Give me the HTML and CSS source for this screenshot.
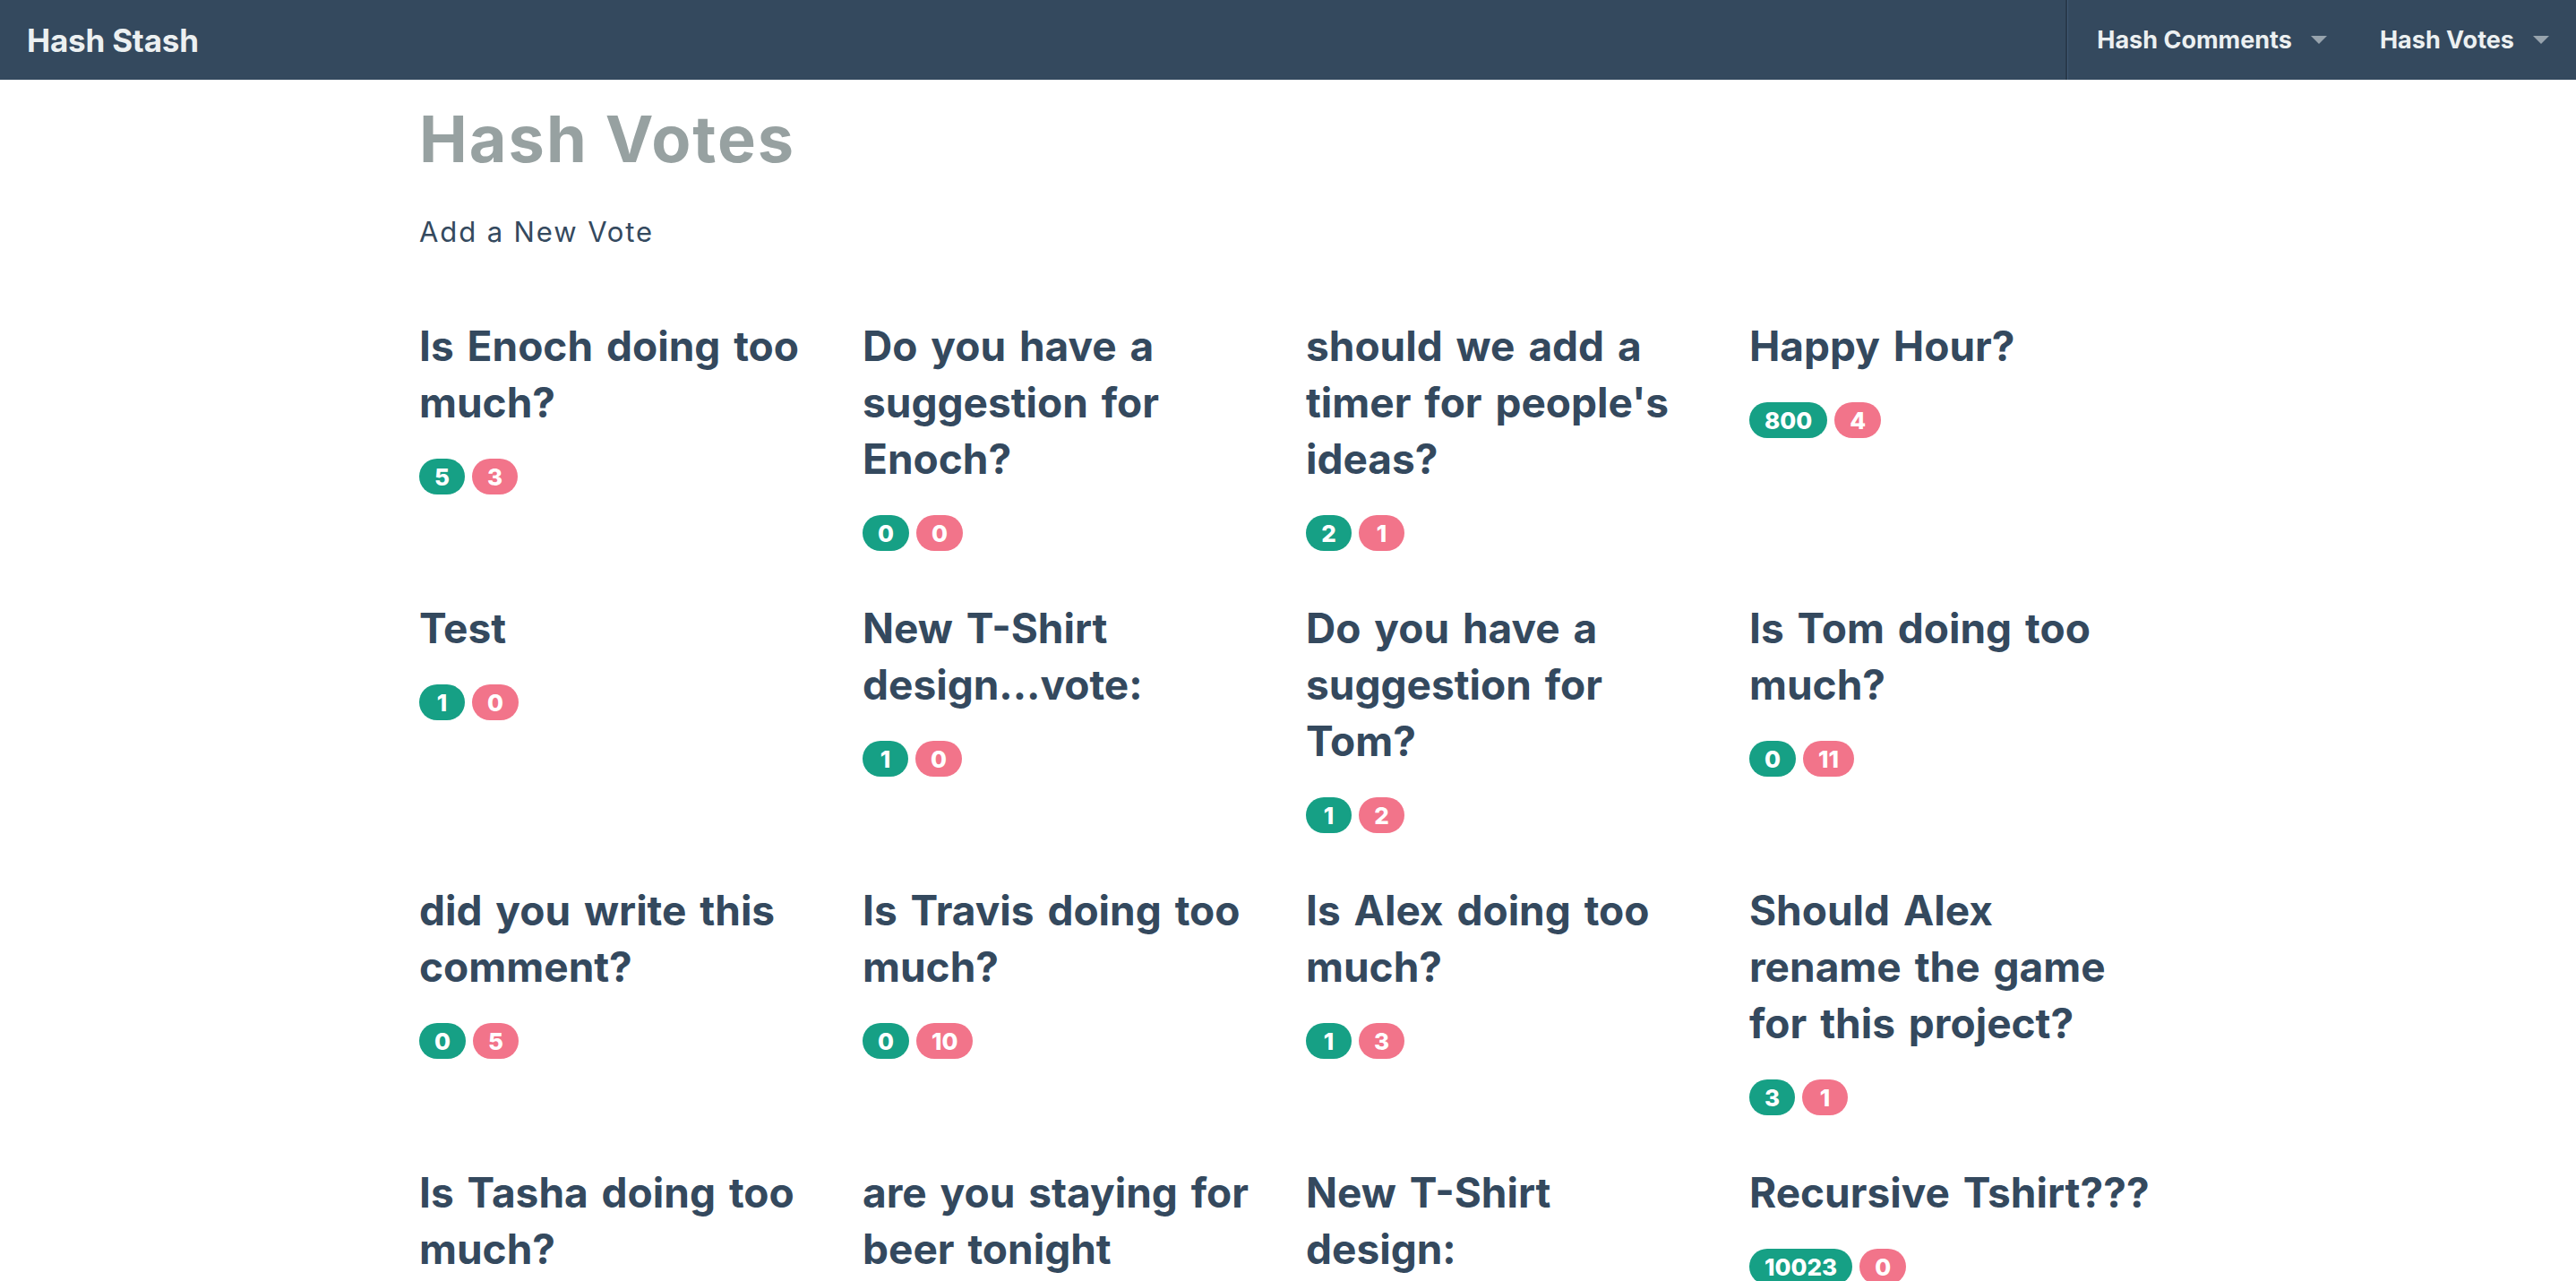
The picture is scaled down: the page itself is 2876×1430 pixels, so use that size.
FILE: index.html
```html
<!DOCTYPE html>
<html lang="en">
<head>
<meta charset="utf-8">
<title>Hash Votes</title>
<link rel="stylesheet" href="styles.css">
</head>
<body>
<nav class="navbar">
  <a class="brand" href="#">Hash Stash</a>
  <ul class="nav-right">
    <li class="nav-item">Hash Comments <span class="caret"></span></li>
    <li class="nav-item">Hash Votes <span class="caret"></span></li>
  </ul>
</nav>
<main class="container">
  <h1 class="page-title">Hash Votes</h1>
  <a class="add-link" href="#">Add a New Vote</a>
  <div class="vote-grid">
    <div class="vote"><h3 class="vote-title">Is Enoch doing too much?</h3><div class="badges"><span class="badge yes">5</span><span class="badge no">3</span></div></div>
    <div class="vote"><h3 class="vote-title">Do you have a suggestion for Enoch?</h3><div class="badges"><span class="badge yes">0</span><span class="badge no">0</span></div></div>
    <div class="vote"><h3 class="vote-title">should we add a timer for people's ideas?</h3><div class="badges"><span class="badge yes">2</span><span class="badge no">1</span></div></div>
    <div class="vote"><h3 class="vote-title">Happy Hour?</h3><div class="badges"><span class="badge yes">800</span><span class="badge no">4</span></div></div>

    <div class="vote"><h3 class="vote-title">Test</h3><div class="badges"><span class="badge yes">1</span><span class="badge no">0</span></div></div>
    <div class="vote"><h3 class="vote-title">New T-Shirt design...vote:</h3><div class="badges"><span class="badge yes">1</span><span class="badge no">0</span></div></div>
    <div class="vote"><h3 class="vote-title">Do you have a suggestion for Tom?</h3><div class="badges"><span class="badge yes">1</span><span class="badge no">2</span></div></div>
    <div class="vote"><h3 class="vote-title">Is Tom doing too much?</h3><div class="badges"><span class="badge yes">0</span><span class="badge no">11</span></div></div>

    <div class="vote"><h3 class="vote-title">did you write this comment?</h3><div class="badges"><span class="badge yes">0</span><span class="badge no">5</span></div></div>
    <div class="vote"><h3 class="vote-title">Is Travis doing too much?</h3><div class="badges"><span class="badge yes">0</span><span class="badge no">10</span></div></div>
    <div class="vote"><h3 class="vote-title">Is Alex doing too much?</h3><div class="badges"><span class="badge yes">1</span><span class="badge no">3</span></div></div>
    <div class="vote"><h3 class="vote-title">Should Alex rename the game for this project?</h3><div class="badges"><span class="badge yes">3</span><span class="badge no">1</span></div></div>

    <div class="vote"><h3 class="vote-title">Is Tasha doing too much?</h3><div class="badges"><span class="badge yes">2</span><span class="badge no">4</span></div></div>
    <div class="vote"><h3 class="vote-title">are you staying for beer tonight</h3><div class="badges"><span class="badge yes">3</span><span class="badge no">0</span></div></div>
    <div class="vote"><h3 class="vote-title">New T-Shirt design:</h3><div class="badges"><span class="badge yes">2</span><span class="badge no">0</span></div></div>
    <div class="vote"><h3 class="vote-title">Recursive Tshirt???</h3><div class="badges"><span class="badge yes">10023</span><span class="badge no">0</span></div></div>
  </div>
</main>
</body>
</html>
```
FILE: styles.css
```css
* { box-sizing: border-box; }

html, body {
  margin: 0;
  padding: 0;
  background: #ffffff;
  font-family: Inter, "Noto Sans", sans-serif;
  color: #34495e;
}

a { text-decoration: none; color: inherit; }

.navbar {
  height: 89px;
  background: #34495e;
  display: flex;
  align-items: stretch;
  justify-content: space-between;
}

.brand {
  display: flex;
  align-items: center;
  padding-left: 30px;
  font-size: 35px;
  font-weight: 700;
  color: #ecf0f1;
  letter-spacing: -0.2px;
}

.nav-right {
  list-style: none;
  margin: 0;
  padding: 0 30px 0 0;
  display: flex;
  align-items: center;
  border-left: 2px solid #293a4b;
  box-shadow: inset 1px 0 0 #3f5873;
  gap: 59px;
}

.nav-item {
  display: flex;
  align-items: center;
  font-size: 27px;
  font-weight: 700;
  color: #ecf0f1;
  letter-spacing: 0;
}

.nav-item:first-child { padding-left: 33px; }

.caret {
  display: inline-block;
  width: 0;
  height: 0;
  margin-left: 21px;
  border-top: 9px solid #97a3ad;
  border-left: 9.5px solid transparent;
  border-right: 9.5px solid transparent;
}

.container {
  width: 1980px;
  margin: 0 auto;
}

.page-title {
  margin: 23px 20px 0;
  font-size: 72px;
  line-height: 1.2;
  font-weight: 700;
  color: #97a1a1;
  letter-spacing: 2px;
}

.add-link {
  display: block;
  margin: 42px 20px 0;
  font-size: 31px;
  line-height: 37px;
  font-weight: 400;
  color: #34495e;
  letter-spacing: 1.9px;
}

.vote-grid {
  margin-top: 78px;
  display: grid;
  grid-template-columns: repeat(4, 1fr);
  row-gap: 55px;
  align-items: start;
}

.vote {
  padding: 0 25px 0 20px;
}

.vote-title {
  margin: 0;
  font-size: 46px;
  line-height: 63px;
  font-weight: 700;
  word-spacing: 4px;
  color: #34495e;
}

.badges {
  margin-top: 31px;
  display: flex;
  gap: 8px;
}

.badge {
  display: inline-flex;
  align-items: center;
  justify-content: center;
  height: 40px;
  min-width: 51px;
  padding: 0 17px;
  border-radius: 20px;
  font-size: 26px;
  font-weight: 800;
  color: #ffffff;
}

.badge.yes { background: #16a085; }
.badge.no { background: #f2748a; }
```
